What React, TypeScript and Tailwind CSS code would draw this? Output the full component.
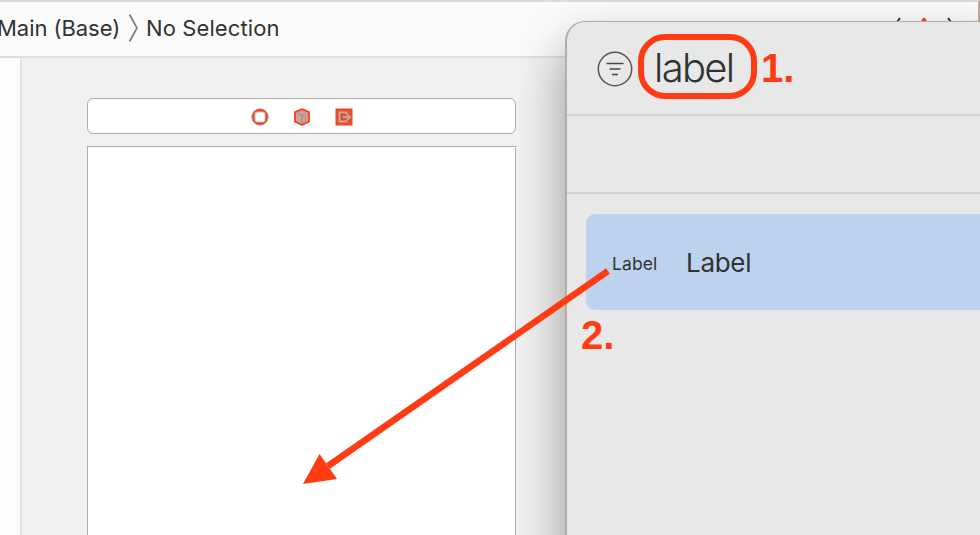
import React from "react";

function PathBar() {
  return (
    <header className="flex h-[58px] w-full shrink-0 items-start border-b-2 border-t-2 border-r-2 border-b-[#dedede] border-r-[#b8aaa5] border-t-[#dcdcdc] bg-[#fbfbfb] text-[22px] text-[#303332]">
      <span className="-ml-[3px] mt-[10px] w-[131px] whitespace-nowrap leading-[32px] tracking-[-0.05px]">Main (Base)</span>
      <svg className="mt-[11px] h-[30px] w-[12px] shrink-0" viewBox="0 0 12 30" fill="none">
        <path d="M1.5 1.5L9 15L1.5 28.5" stroke="#857b78" strokeWidth="1.7" />
      </svg>
      <span className="ml-[6px] mt-[10px] whitespace-nowrap leading-[32px] tracking-[0.1px]">No Selection</span>
      <div className="ml-auto mr-[22px] mt-[15px] flex items-start gap-[10px]">
        <svg className="h-[18px] w-[10px]" viewBox="0 0 10 18" fill="none">
          <path d="M8 1L2 9l6 8" stroke="#333" strokeWidth="2" />
        </svg>
        <svg className="h-[18px] w-[24px]" viewBox="0 0 24 18">
          <path d="M12 2.5L20 17H4Z" fill="#ff3b14" stroke="#ff3b14" strokeWidth="3.5" strokeLinejoin="round" />
        </svg>
        <svg className="h-[18px] w-[10px]" viewBox="0 0 10 18" fill="none">
          <path d="M2 1l6 8-6 8" stroke="#333" strokeWidth="2" />
        </svg>
      </div>
    </header>
  );
}

function SceneDock() {
  return (
    <div className="flex h-[36px] w-[429px] items-center justify-center gap-[24px] rounded-[6px] border border-[#b8aaa5] bg-white pt-px">
      <svg className="h-[18px] w-[18px]" viewBox="0 0 18 18">
        <circle cx="9" cy="9" r="8.2" fill="#ff3b14" stroke="#a99b96" />
        <rect x="4" y="4" width="10" height="10" rx="2" fill="#fff" stroke="#c9beba" />
      </svg>
      <svg className="h-[18px] w-[18px]" viewBox="0 0 18 18">
        <path d="M9 1.2L16 4.2v9.3L9 17l-7-3.5V4.2Z" fill="#b9aaa5" stroke="#ff3b14" strokeWidth="1.8" />
        <path d="M5 5.5l4 2 4-2M9 8v8M12.5 8v5" fill="none" stroke="#e0705a" strokeWidth="1" />
      </svg>
      <svg className="h-[18px] w-[18px]" viewBox="0 0 18 18">
        <rect x=".5" y=".5" width="17" height="17" fill="#ee4a27" />
        <path d="M11.5 6.5V4.5H4.5v9h7v-2M8 9h7M12.5 6.5L15 9l-2.500 2.500" fill="none" stroke="#b9aaa5" strokeWidth="2" />
      </svg>
    </div>
  );
}

function LibraryPanel() {
  return (
    <aside className="absolute left-[565px] top-[21px] flex h-[560px] w-[440px] flex-col overflow-hidden rounded-tl-[20px] border-l-2 border-t border-l-[#b8aaa5] border-t-[#b8aaa5] bg-[#e8e8e8] text-[#303332] shadow-[0_24px_50px_rgba(0,0,0,0.38)]">
      <div className="flex h-[94px] shrink-0 items-start border-b-2 border-[#d0d0d0]">
        <svg className="ml-[30px] mt-[29px] h-[36px] w-[36px] shrink-0" viewBox="0 0 36 36" fill="none">
          <circle cx="18" cy="18" r="16.7" stroke="#5d5452" strokeWidth="1.5" />
          <path d="M9.5 12.5h17M12.5 18h11M15 23.5h6" stroke="#4d4543" strokeWidth="1.7" />
        </svg>
        <div className="ml-[5px] mt-[12px] flex h-[65px] w-[119px] shrink-0 items-center rounded-[27px] border-[6px] border-[#ff3b14] pl-[10px] pt-[2px] text-[40px] font-[350] leading-none">
          <span className="tracking-[-1.7px]">label</span>
        </div>
        <span className="ml-[4px] mt-[24px] font-['Liberation_Sans',sans-serif] text-[40px] font-bold leading-[44px] text-[#ff3b14]">1.</span>
      </div>
      <div className="h-[78px] shrink-0 border-b-2 border-[#d0d0d0]" />
      <div className="ml-[19px] mt-[20px] flex h-[96px] shrink-0 items-center rounded-l-[9px] bg-[#bdd2ed]">
        <span className="ml-[26px] mt-[4px] w-[74px] text-[17.5px] tracking-[0.1px]">Label</span>
        <span className="text-[26px] tracking-[-0.3px]">Label</span>
      </div>
      <span className="ml-[14px] mt-[3px] font-['Liberation_Sans',sans-serif] text-[40px] font-bold leading-[44px] text-[#ff3b14]">2.</span>
    </aside>
  );
}

export default function App() {
  return (
    <div className="relative flex h-[535px] w-[980px] flex-col overflow-hidden bg-[#f1f1f1] font-['Inter',sans-serif]">
      <PathBar />
      <main className="flex min-h-0 flex-1">
        <div className="w-[22px] shrink-0 border-r-2 border-[#e3e3e3] bg-[#fdfdfd]" />
        <div className="flex flex-col gap-[12px] pl-[65px] pt-[40px]">
          <SceneDock />
          <div className="w-[429px] flex-1 border border-b-0 border-[#b8aaa5] bg-white" />
        </div>
      </main>
      <LibraryPanel />
      <svg className="pointer-events-none absolute inset-0 h-full w-full" viewBox="0 0 980 535">
        <path d="M608 271L328 466" stroke="#ff3b14" strokeWidth="6.5" />
        <path d="M303 484L319.5 454L337 479Z" fill="#ff3b14" />
      </svg>
    </div>
  );
}
